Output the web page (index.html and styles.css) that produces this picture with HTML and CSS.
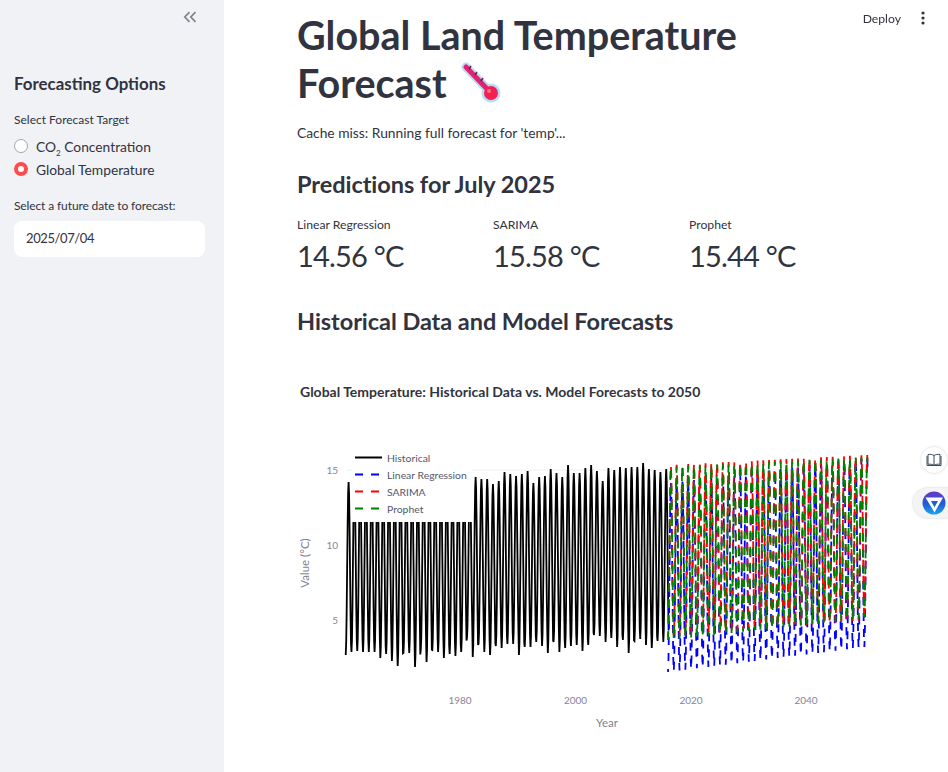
FILE: index.html
```html
<!DOCTYPE html>
<html lang="en">
<head>
    <meta charset="UTF-8">
    <title>Global Land Temperature Forecast</title>
    <link rel="stylesheet" href="styles.css">
</head>
<body>
    <div class="app">
        <aside class="sidebar">
            <div class="collapse-row">
                <svg class="collapse-icon" width="14" height="12" viewBox="0 0 14 12">
                    <path d="M6.500 1.200 1.800 6l4.700 4.800M12.500 1.200 7.800 6l4.700 4.800"/>
                </svg>
            </div>
            <h2 class="side-title">Forecasting Options</h2>
            <div class="field-label">Select Forecast Target</div>
            <div class="radio-group">
                <div class="radio-row"><span class="radio"></span><span>CO<sub>2</sub> Concentration</span></div>
                <div class="radio-row"><span class="radio checked"></span><span>Global Temperature</span></div>
            </div>
            <div class="field-label date-label">Select a future date to forecast:</div>
            <div class="date-input">2025/07/04</div>
        </aside>

        <main class="main">
            <h1 class="title">Global Land Temperature Forecast
                <svg class="emoji" width="42" height="44" viewBox="0 0 42 44">
                    <path class="tube-outline" d="M5 5 30 31"/>
                    <circle class="bulb-outline" cx="30" cy="31" r="9.500"/>
                    <path class="tube" d="M5 5 30 31"/>
                    <circle class="bulb" cx="30" cy="31" r="7"/>
                    <circle class="bulb-shine" cx="28" cy="29" r="2"/>
                    <path class="ticks" d="M10 4 8 7M16 10 14 13M22 16 20 19"/>
                </svg>
            </h1>
            <p class="note">Cache miss: Running full forecast for 'temp'...</p>
            <h2 class="section-title">Predictions for July 2025</h2>
            <div class="metrics">
                <div class="metric">
                    <div class="metric-label">Linear Regression</div>
                    <div class="metric-value">14.56 °C</div>
                </div>
                <div class="metric">
                    <div class="metric-label">SARIMA</div>
                    <div class="metric-value">15.58 °C</div>
                </div>
                <div class="metric">
                    <div class="metric-label">Prophet</div>
                    <div class="metric-value">15.44 °C</div>
                </div>
            </div>
            <h2 class="section-title chart-heading">Historical Data and Model Forecasts</h2>
            <svg id="chart" class="chart" width="600" height="390" viewBox="297 372 600 390"></svg>
        </main>
    </div>

    <div class="topbar">
        <span class="deploy">Deploy</span>
        <svg width="4" height="14" viewBox="0 0 4 14" class="kebab">
            <circle cx="2" cy="2" r="1.600"/><circle cx="2" cy="7" r="1.600"/><circle cx="2" cy="12" r="1.600"/>
        </svg>
    </div>

    <div class="float-btn book-btn">
        <svg width="16" height="14" viewBox="0 0 16 14">
            <path d="M8 2.500C6.500 1.400 4 1.200 2 1.500v9.800c2-.3 4.500-.1 6 1 1.500-1.100 4-1.300 6-1V1.500c-2-.3-4.500-.1-6 1zM8 2.500v9.800M1 3v9.500h14V3"/>
        </svg>
    </div>
    <div class="float-btn logo-btn">
        <svg width="24" height="24" viewBox="0 0 24 24">
            <defs>
                <linearGradient id="logoFill" x1="0.5" y1="0" x2="0.5" y2="1">
                    <stop offset="0" stop-color="#6a35c8"/>
                    <stop offset="0.55" stop-color="#1c5fd6"/>
                    <stop offset="1" stop-color="#22a6e8"/>
                </linearGradient>
            </defs>
            <circle cx="12" cy="12" r="11.500" fill="url(#logoFill)"/>
            <path fill="#fff" fill-rule="evenodd" d="M3.500 6.500h17.500L12.500 21.500zM9 10l3.500 6.300L16 10z"/>
        </svg>
    </div>

    <script src="chart.js"></script>
</body>
</html>
```

FILE: styles.css
```css
* {
    box-sizing: border-box;
}
html, body {
    height: 100%;
}
body {
    margin: 0;
    font-family: Lato, "Noto Sans", sans-serif;
    color: #31333f;
    background-color: #ffffff;
    overflow: hidden;
}
.app {
    display: flex;
    height: 100%;
}

/* sidebar */
.sidebar {
    width: 224px;
    flex-shrink: 0;
    padding: 0 19px 0 14px;
    background-color: #f0f2f6;
}
.collapse-row {
    display: flex;
    justify-content: flex-end;
    padding: 11px 8px 0 0;
    height: 70px;
}
.collapse-icon {
    fill: none;
    stroke: #7f828b;
    stroke-width: 1.700;
}
.side-title {
    margin: 0 0 13px;
    font-size: 16.900px;
    line-height: 28px;
    font-weight: 700;
}
.field-label {
    font-size: 12px;
    line-height: 18px;
}
.radio-group {
    margin-top: 7px;
    display: flex;
    flex-direction: column;
    gap: 3px;
}
.radio-row {
    display: flex;
    align-items: center;
    gap: 8px;
    height: 20px;
    font-size: 13.800px;
}
.radio-row sub {
    font-size: 8px;
    line-height: 0;
}
.radio {
    width: 14px;
    height: 14px;
    border-radius: 50%;
    border: 1px solid #a3a6ad;
    background-color: #ffffff;
}
.radio.checked {
    border: 4px solid #ff4b4b;
}
.date-label {
    margin-top: 18px;
    letter-spacing: -0.12px;
}
.date-input {
    margin-top: 6px;
    height: 36px;
    padding-left: 12px;
    line-height: 35px;
    font-size: 13px;
    letter-spacing: -0.4px;
    background-color: #ffffff;
    border-radius: 8px;
}

/* main column */
.main {
    flex: 1;
    padding: 11px 0 0 73px;
    min-width: 0;
}
.title {
    margin: 0;
    max-width: 470px;
    font-size: 39.500px;
    line-height: 48px;
    font-weight: 700;
}
.emoji {
    margin-left: 5px;
    vertical-align: -8px;
}
.tube-outline {
    stroke: #b5dcfb;
    stroke-width: 9;
    stroke-linecap: round;
}
.bulb-outline {
    fill: #b5dcfb;
}
.tube {
    stroke: #e2226e;
    stroke-width: 5;
    stroke-linecap: round;
}
.bulb {
    fill: #f5204f;
}
.bulb-shine {
    fill: #fb6f8e;
}
.ticks {
    stroke: #3d3054;
    stroke-width: 1.500;
}
.note {
    margin: 16px 0 0;
    font-size: 13.800px;
    line-height: 20px;
}
.section-title {
    margin: 25px 0 0;
    font-size: 23.500px;
    line-height: 32px;
    font-weight: 700;
    letter-spacing: -0.05px;
}
.metrics {
    display: flex;
    margin-top: 16px;
}
.metric {
    width: 196px;
}
.metric-label {
    font-size: 12.200px;
    line-height: 18px;
}
.metric-value {
    margin-top: 2px;
    font-size: 29px;
    line-height: 40px;
    letter-spacing: -0.8px;
}
.chart-heading {
    margin-top: 29px;
}
.chart {
    display: block;
    margin-top: 35px;
}

/* chart text */
.chart text {
    font-family: Lato, "Noto Sans", sans-serif;
}
.chart-title {
    font-size: 14px;
    font-weight: 700;
    fill: #31333f;
}
.tick-label {
    font-size: 10px;
    fill: #85859c;
}
.axis-label {
    font-size: 11.500px;
    fill: #7f7f95;
}
.legend-label {
    font-size: 10.400px;
    fill: #55586a;
}

/* top right + floating buttons */
.topbar {
    position: fixed;
    top: 0;
    right: 0;
    height: 36px;
    padding-right: 23px;
    display: flex;
    align-items: center;
    gap: 20px;
}
.deploy {
    font-size: 12.200px;
}
.kebab {
    fill: #31333f;
}
.float-btn {
    position: fixed;
    display: flex;
    align-items: center;
    background-color: #ffffff;
    border: 1px solid #ececec;
    box-shadow: 0 0 3px rgba(0, 0, 0, 0.05);
}
.book-btn {
    top: 446px;
    left: 920px;
    width: 28px;
    height: 28px;
    justify-content: center;
    border-radius: 50%;
}
.book-btn svg {
    fill: none;
    stroke: #3b4a5c;
    stroke-width: 1;
}
.logo-btn {
    top: 487px;
    left: 912px;
    width: 50px;
    height: 32px;
    padding-left: 9px;
    border-radius: 16px;
    background-color: #f4f4f4;
}
```

FILE: chart.js
```js
// plain svg drawing of the temperature chart, page coords via the viewBox
var svg = document.getElementById('chart');
var NS = 'http://www.w3.org/2000/svg';

function add(tag, attrs, text) {
    var el = document.createElementNS(NS, tag);
    for (var k in attrs) {
        el.setAttribute(k, attrs[k]);
    }
    if (text) {
        el.textContent = text;
    }
    svg.appendChild(el);
    return el;
}

var PERIOD = 5.775; // px per year

// pixel y of the low / high of each year
var troughs = [655, 652, 651, 652, 652, 652, 658, 654, 661, 666, 653, 653, 667, 650, 662, 650, 652, 658, 654, 656,
    652, 638, 657, 644, 652, 655, 646, 648, 644, 644, 655, 647, 647, 642, 646, 653, 642, 652, 648, 646,
    645, 651, 645, 635, 636, 642, 638, 647, 640, 653, 641, 639, 645, 648, 641, 642, 638];
var peaks = [482, 478, 480, 478, 479, 481, 478, 480, 479, 477, 480, 478, 481, 479, 478, 480, 478, 479, 481, 478, 480, 478,
    477, 479, 479, 484, 481, 472, 474, 476, 474, 471, 483, 477, 476, 469, 473, 477, 465, 473, 473, 468, 465, 471,
    481, 468, 470, 467, 468, 467, 467, 463, 469, 470, 472, 469];

// one sine wave per year, 12 points a year
function wavePath(startX, years, lowAt, highAt) {
    var pts = [];
    var total = Math.round(years * 12);
    for (var m = 0; m <= total; m++) {
        var t = m / 12;
        var i = Math.floor(t);
        var phase = (1 - Math.cos(2 * Math.PI * t)) / 2;
        var low = lowAt(i);
        var high = highAt(i);
        var x = startX + t * PERIOD;
        var y = low + (high - low) * phase;
        pts.push(x.toFixed(2) + ' ' + y.toFixed(1));
    }
    return 'M' + pts.join('L');
}

// gridlines
[470, 545, 620].forEach(function (y) {
    add('path', { d: 'M346 ' + y + 'H868', stroke: '#ebf0f8', 'stroke-width': 1 });
});

// historical
add('path', {
    d: wavePath(345.7, 56, function (i) { return troughs[i]; }, function (i) { return peaks[i]; }),
    fill: 'none', stroke: '#000', 'stroke-width': 1.8
});

// forecasts: trough and peak y at start and end of the 34.6 years
var forecasts = [
    { color: '#0000ff', low: [672, 647], high: [483, 458], offset: 5 },
    { color: '#ff0000', low: [637, 620], high: [465, 455], offset: 2 },
    { color: '#008000', low: [640, 618], high: [467, 457], offset: 0 }
];
forecasts.forEach(function (f) {
    function lerp(r) {
        return function (i) { return r[0] + (r[1] - r[0]) * i / 34; };
    }
    add('path', {
        d: wavePath(668, 34.6, lerp(f.low), lerp(f.high)),
        fill: 'none', stroke: f.color, 'stroke-width': 1.8,
        'stroke-dasharray': '8 8', 'stroke-dashoffset': f.offset
    });
});

// legend sits on top of the lines
add('rect', { x: 352, y: 449, width: 120, height: 73, fill: '#fff' });
var legend = [
    { name: 'Historical', color: '#000', dash: null },
    { name: 'Linear Regression', color: '#0000ff', dash: '8 8' },
    { name: 'SARIMA', color: '#ff0000', dash: '8 8' },
    { name: 'Prophet', color: '#008000', dash: '8 8' }
];
legend.forEach(function (item, i) {
    var y = 457.5 + i * 17;
    var line = { d: 'M355 ' + y + 'H382', stroke: item.color, 'stroke-width': 2 };
    if (item.dash) {
        line['stroke-dasharray'] = item.dash;
    }
    add('path', line);
    add('text', { x: 387, y: y + 4, 'class': 'legend-label' }, item.name);
});

// axis text
add('text', { x: 300, y: 397, 'class': 'chart-title' }, 'Global Temperature: Historical Data vs. Model Forecasts to 2050');
[[15, 470], [10, 545], [5, 620]].forEach(function (t) {
    add('text', { x: 338, y: t[1] + 3.5, 'text-anchor': 'end', 'class': 'tick-label' }, String(t[0]));
});
[[1980, 460], [2000, 575.5], [2020, 691], [2040, 806]].forEach(function (t) {
    add('text', { x: t[1], y: 704, 'text-anchor': 'middle', 'class': 'tick-label' }, String(t[0]));
});
add('text', { x: 607, y: 727, 'text-anchor': 'middle', 'class': 'axis-label' }, 'Year');
add('text', { x: 309, y: 563, 'text-anchor': 'middle', 'class': 'axis-label', transform: 'rotate(-90 309 563)' }, 'Value (°C)');
```
